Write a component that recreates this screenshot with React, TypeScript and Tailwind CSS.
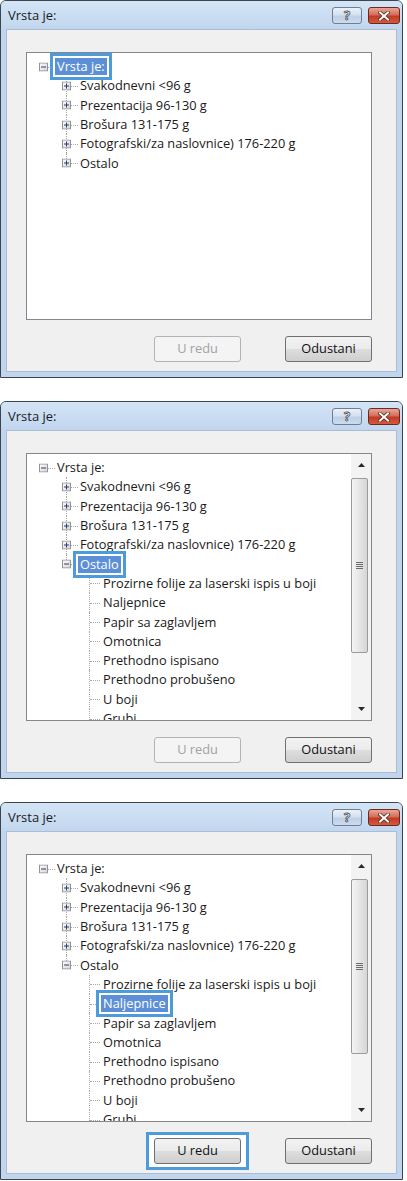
import React from "react";

type Row = {
  label: string;
  level: number;
  exp?: "plus" | "minus";
  last?: boolean;
  sel?: boolean;
};

const font = "font-['Open_Sans','Noto_Sans',sans-serif]";

const baseRows: Row[] = [
  { label: "Vrsta je:", level: 0, exp: "minus" },
  { label: "Svakodnevni <96 g", level: 1, exp: "plus" },
  { label: "Prezentacija 96-130 g", level: 1, exp: "plus" },
  { label: "Brošura 131-175 g", level: 1, exp: "plus" },
  { label: "Fotografski/za naslovnice) 176-220 g", level: 1, exp: "plus" },
];

const otherItems = [
  "Prozirne folije za laserski ispis u boji",
  "Naljepnice",
  "Papir sa zaglavljem",
  "Omotnica",
  "Prethodno ispisano",
  "Prethodno probušeno",
  "U boji",
  "Grubi",
];

const Expander = ({ open }: { open: boolean }) => (
  <svg width="9" height="9" viewBox="0 0 9 9" className="block">
    <defs>
      <linearGradient id="expg" x1="0" y1="0" x2="1" y2="1">
        <stop offset="0" stopColor="#ffffff" />
        <stop offset="1" stopColor="#d4d4d4" />
      </linearGradient>
    </defs>
    <rect x="0.5" y="0.5" width="8" height="8" fill="url(#expg)" stroke="#939393" />
    <path d="M2 4.5h5" stroke="#2b3e78" />
    {!open && <path d="M4.5 2v5" stroke="#2b3e78" />}
  </svg>
);

const TreeRow = ({ row }: { row: Row }) => {
  const indent = row.level === 0 ? "pl-0" : row.level === 1 ? "pl-[23px]" : "pl-[46px]";
  return (
    <div className={`relative flex items-center h-[19.3px] ${indent}`}>
      <div className="relative w-[28px] h-full shrink-0">
        {row.level > 0 && (
          <div
            className={`absolute left-[16px] top-0 border-l border-dotted border-[#a8a8a8] ${
              row.last ? "h-1/2" : "h-full"
            }`}
          />
        )}
        {row.exp ? (
          <>
            <div className="absolute left-[21px] w-[7px] top-1/2 border-t border-dotted border-[#a8a8a8]" />
            <div className="absolute left-[12px] top-1/2 -translate-y-1/2">
              <Expander open={row.exp === "minus"} />
            </div>
          </>
        ) : (
          <div className="absolute left-[17px] w-[10px] top-1/2 border-t border-dotted border-[#a8a8a8]" />
        )}
      </div>
      {row.sel ? (
        <span className="relative z-10 inline-flex">
          <span className="absolute -inset-[5px] border-[3px] border-[#4c9cdc] bg-white" />
          <span className="relative px-[2px] h-[17px] leading-[17px] bg-[#5d8fd7] text-white whitespace-nowrap">
            {row.label}
          </span>
        </span>
      ) : (
        <span className="px-[2px] h-[17px] leading-[17px] text-[#1a1a1a] whitespace-nowrap">{row.label}</span>
      )}
    </div>
  );
};

const Scrollbar = () => (
  <div className="w-[20px] shrink-0 flex flex-col bg-[#f3f3f3]">
    <div className="h-[22px] flex items-center justify-center">
      <svg width="7" height="4" viewBox="0 0 7 4">
        <path d="M3.5 0L7 4H0z" fill="#2a2a2a" />
      </svg>
    </div>
    <div className="mt-[2px] h-[175px] w-[17px] rounded-[2px] border border-[#9b9b9b] bg-[linear-gradient(90deg,#f4f4f4,#e6e6e6_50%,#d6d6d6)] flex items-center justify-center">
      <div className="flex flex-col gap-[1px]">
        <div className="w-[7px] h-[1px] bg-[#6c6c6c]" />
        <div className="w-[7px] h-[1px] bg-[#6c6c6c]" />
        <div className="w-[7px] h-[1px] bg-[#6c6c6c]" />
        <div className="w-[7px] h-[1px] bg-[#6c6c6c]" />
      </div>
    </div>
    <div className="flex-1" />
    <div className="h-[22px] flex items-center justify-center">
      <svg width="7" height="4" viewBox="0 0 7 4">
        <path d="M0 0H7L3.5 4z" fill="#2a2a2a" />
      </svg>
    </div>
  </div>
);

const Button = ({ label, enabled, callout }: { label: string; enabled: boolean; callout?: boolean }) => {
  const btn = (
    <div
      className={`relative w-[87px] h-[26px] rounded-[3px] border flex items-center justify-center text-[12.8px] ${
        enabled
          ? "border-[#707070] bg-[linear-gradient(#f3f3f3_0%,#ebebeb_48%,#dddddd_52%,#cfcfcf_100%)] text-[#111]"
          : "border-[#b3b3b3] bg-[#f4f4f4] text-[#a2a2a2]"
      }`}
    >
      {label}
    </div>
  );
  if (!callout) return btn;
  return (
    <div className="relative z-10">
      <div className="absolute -inset-x-[8px] -inset-y-[6px] border-[3px] border-[#4c9cdc] bg-white" />
      {btn}
    </div>
  );
};

const Dialog = ({
  rows,
  scroll,
  okEnabled,
  okCallout,
}: {
  rows: Row[];
  scroll: boolean;
  okEnabled: boolean;
  okCallout?: boolean;
}) => (
  <div className="w-[403px] h-[378px] flex flex-col rounded-t-[6px] border border-[#3b4550] bg-[#c1d6ee]">
    {/* title bar */}
    <div className="h-[28px] shrink-0 flex items-start rounded-t-[5px] bg-[linear-gradient(#d4e4f6,#c1d6ee)]">
      <div className="pl-[7px] pt-[5px] text-[13px] text-[#1b1b1b]">Vrsta je:</div>
      <div className="ml-auto mr-[2px] mt-[6px] flex gap-[6px]">
        <div className="w-[30px] h-[17px] rounded-[3px] border border-[#6f7e93] bg-[linear-gradient(#eaf1f8,#d5e1ef_45%,#bfcfe4_55%,#ccdbed)] flex items-center justify-center">
          <span className="text-[13px] font-bold leading-none text-white [-webkit-text-stroke:0.8px_#4a5563]">?</span>
        </div>
        <div className="w-[32px] h-[17px] rounded-[3px] border border-[#6b2a21] bg-[linear-gradient(#eaa597,#d66e58_45%,#c23b22_55%,#d45a40)] flex items-center justify-center">
          <svg width="12" height="10" viewBox="0 0 12 10">
            <path d="M2 1.5l8 7M10 1.5l-8 7" stroke="#5a2a24" strokeWidth="3.6" strokeLinecap="square" />
            <path d="M2 1.5l8 7M10 1.5l-8 7" stroke="#ffffff" strokeWidth="2" strokeLinecap="square" />
          </svg>
        </div>
      </div>
    </div>
    {/* body */}
    <div className="mx-[5px] mb-[5px] flex-1 border border-[#aabdd4] bg-[#f0f0f0] flex flex-col pl-[19px] pt-[22px]">
      <div className="w-[346px] h-[268px] border border-[#828790] bg-white flex">
        <div className="flex-1 overflow-hidden pt-[4px] text-[12.8px]">
          {rows.map((r, i) => (
            <TreeRow key={i} row={r} />
          ))}
        </div>
        {scroll && <Scrollbar />}
      </div>
      <div className="w-[346px] mt-[16px] flex justify-end gap-[44px]">
        <Button label="U redu" enabled={okEnabled} callout={okCallout} />
        <Button label="Odustani" enabled />
      </div>
    </div>
  </div>
);

export default function App() {
  const d1: Row[] = [
    { ...baseRows[0], sel: true },
    ...baseRows.slice(1),
    { label: "Ostalo", level: 1, exp: "plus", last: true },
  ];
  const expanded = (selIdx: number | null, ostaloSel: boolean): Row[] => [
    ...baseRows,
    { label: "Ostalo", level: 1, exp: "minus", last: true, sel: ostaloSel },
    ...otherItems.map((t, i) => ({ label: t, level: 2, sel: i === selIdx })),
  ];
  return (
    <div className={`w-[407px] h-[1181px] bg-white flex flex-col gap-[23px] ${font}`}>
      <Dialog rows={d1} scroll={false} okEnabled={false} />
      <Dialog rows={expanded(null, true)} scroll okEnabled={false} />
      <Dialog rows={expanded(1, false)} scroll okEnabled okCallout />
    </div>
  );
}
